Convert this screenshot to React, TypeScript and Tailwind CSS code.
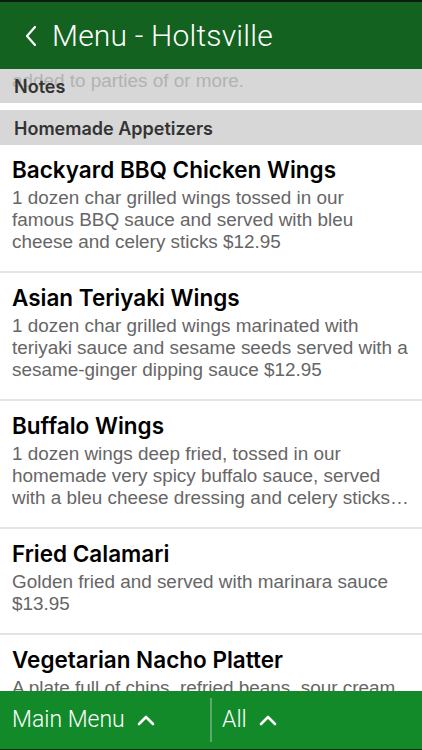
import React from 'react';

interface Item {
  name: string;
  description: string;
}

const items: Item[] = [
  {
    name: 'Backyard BBQ Chicken Wings',
    description:
      '1 dozen char grilled wings tossed in our famous BBQ sauce and served with bleu cheese and celery sticks $12.95',
  },
  {
    name: 'Asian Teriyaki Wings',
    description:
      '1 dozen char grilled wings marinated with teriyaki sauce and sesame seeds served with a sesame-ginger dipping sauce $12.95',
  },
  {
    name: 'Buffalo Wings',
    description:
      '1 dozen wings deep fried, tossed in our homemade very spicy buffalo sauce, served with a bleu cheese dressing and celery sticks $12.95',
  },
  {
    name: 'Fried Calamari',
    description: 'Golden fried and served with marinara sauce $13.95',
  },
  {
    name: 'Vegetarian Nacho Platter',
    description:
      'A plate full of chips, refried beans, sour cream, salsa, jalapeños and melted cheese $10.95',
  },
];

const ChevronUp = () => (
  <svg width="18" height="12" viewBox="0 0 18 12" fill="none" className="ml-3">
    <path d="M2 10L9 3L16 10" stroke="white" strokeWidth="2.6" strokeLinecap="round" strokeLinejoin="round" />
  </svg>
);

const App = () => {
  return (
    <div className="w-[422px] h-[750px] flex flex-col overflow-hidden bg-white font-['Liberation_Sans',Arial,sans-serif]">
      {/* Nav bar */}
      <div className="h-[2px] bg-[#0c1f0f]" />
      <div className="h-[67px] bg-[#14621f] flex items-center pl-[24px] text-white">
        <svg width="14" height="22" viewBox="0 0 14 22" fill="none">
          <path d="M11 2L3 11L11 20" stroke="white" strokeWidth="2.2" strokeLinecap="round" strokeLinejoin="round" />
        </svg>
        <span className="ml-[14px] text-[30px] font-light tracking-[0.2px] font-['Roboto',sans-serif]">
          Menu - Holtsville
        </span>
      </div>

      {/* List */}
      <div className="flex-1 overflow-hidden">
        <div className="relative h-[34px] bg-[#d7d7d7] flex items-end pb-[6px] px-[14px] overflow-hidden">
          <span className="absolute left-[12px] top-[-1px] text-[18.9px] leading-[25px] text-[#b2b2b2]">
            added to parties of or more.
          </span>
          <span className="relative text-[18px] leading-[20px] font-semibold text-[#333] font-['Inter',sans-serif]">
            Notes
          </span>
        </div>
        <div className="h-[7px] bg-white" />
        <div className="h-[35px] bg-[#d7d7d7] flex items-center pt-[2px] px-[14px]">
          <span className="text-[18px] leading-[20px] font-semibold text-[#333] font-['Inter',sans-serif]">
            Homemade Appetizers
          </span>
        </div>

        {items.map((item) => (
          <div key={item.name} className="pl-[12px] pr-[11px] pt-[12px] pb-[18px] border-b-2 border-[#e4e4e4]">
            <div className="text-[22.5px] leading-[26px] font-semibold text-black font-['Inter',sans-serif]">
              {item.name}
            </div>
            <p className="mt-[4px] text-[18.9px] leading-[22px] text-[#666] line-clamp-3">{item.description}</p>
          </div>
        ))}
      </div>

      {/* Bottom bar */}
      <div className="h-[59px] bg-[#128a2a] flex items-center text-white border-b border-[#0a2a10]">
        <div className="w-[210px] flex items-center pl-[12px] text-[23px] font-light font-['Roboto',sans-serif]">
          Main Menu
          <ChevronUp />
        </div>
        <div className="w-[2px] h-[44px] bg-[#5aa86a]" />
        <div className="flex items-center pl-[10px] text-[23px] font-light font-['Roboto',sans-serif]">
          All
          <ChevronUp />
        </div>
      </div>
    </div>
  );
};

export default App;
